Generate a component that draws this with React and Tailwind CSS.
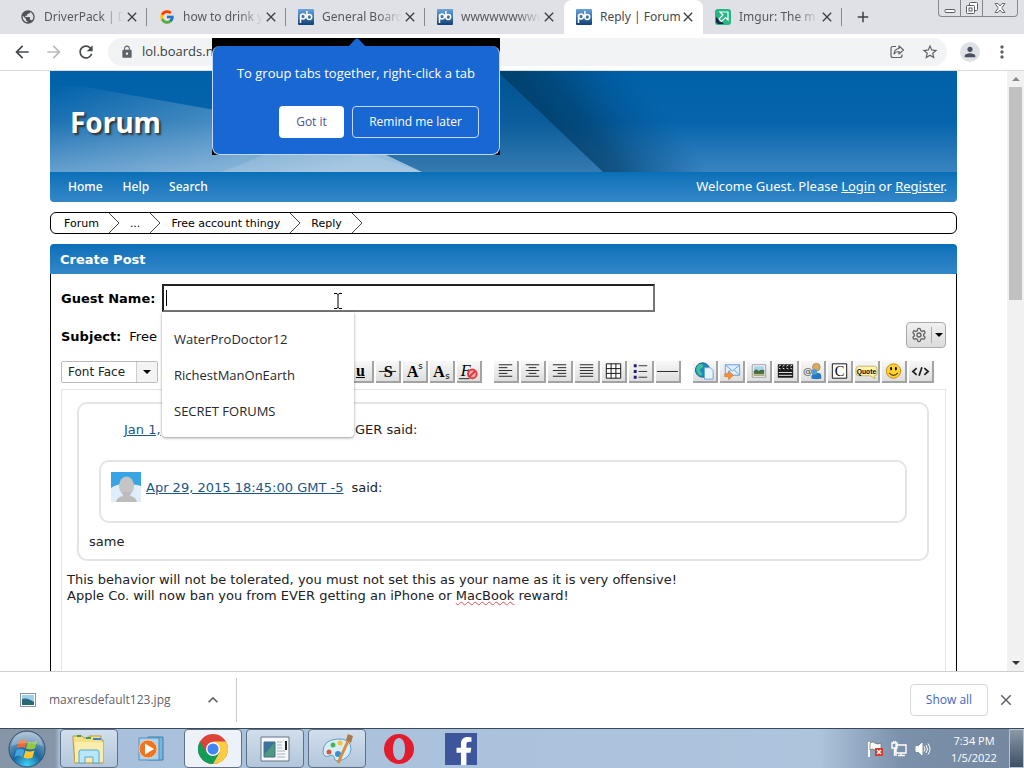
import React, { useState } from "react";
import { MdArrowBack, MdArrowForward, MdRefresh, MdLock, MdStarBorder, MdPerson, MdMoreVert, MdClose, MdAdd, MdPublic, MdKeyboardArrowUp } from "react-icons/md";
import { FcGoogle } from "react-icons/fc";
import { FaFacebookF } from "react-icons/fa";
import { LuSettings } from "react-icons/lu";

const ProboardsIcon = () => (
  <svg viewBox="0 0 16 16" className="h-4 w-4">
    <defs>
      <linearGradient id="pb" x1="0" y1="0" x2="0" y2="1">
        <stop offset="0" stopColor="#6aa5dc" />
        <stop offset="1" stopColor="#123f78" />
      </linearGradient>
    </defs>
    <rect x="0" y="0" width="16" height="16" rx="1" fill="url(#pb)" />
    <g fill="none" stroke="#fff" strokeWidth="1.5">
      <path d="M2.500 14V5.500" />
      <circle cx="5" cy="7.500" r="2.400" />
      <path d="M8.900 2v6" />
      <circle cx="11.300" cy="8" r="2.400" />
    </g>
  </svg>
);

const ImgurIcon = () => (
  <svg viewBox="0 0 16 16" className="h-4 w-4">
    <rect width="16" height="16" rx="3" fill="#27b584" />
    <path d="M1 8v4a3 3 0 0 0 3 3h5l-2-2H4.500L3.500 10z" fill="#12263f" />
    <path d="M5 3h8v8l-2.500-2.500L6.500 12.500 4 10l4-4z" fill="#27b584" stroke="#fff" strokeWidth="1.200" />
  </svg>
);

const tabs = [
  { title: "DriverPack | D", icon: <MdPublic className="h-4 w-4 text-[#4f5358]" /> },
  { title: "how to drink y", icon: <FcGoogle className="h-4 w-4" /> },
  { title: "General Board", icon: <ProboardsIcon /> },
  { title: "wwwwwwwww", icon: <ProboardsIcon /> },
  { title: "Reply | Forum", icon: <ProboardsIcon />, active: true },
  { title: "Imgur: The m", icon: <ImgurIcon /> },
];

function Tab({ tab, divider }) {
  return (
    <div className={`relative flex h-full w-[139px] min-w-0 items-center pl-3 ${tab.active ? "rounded-t-lg bg-white" : ""}`}>
      <span className="shrink-0">{tab.icon}</span>
      <span className={`ml-2 w-20 overflow-hidden font-['Noto_Sans',sans-serif] text-xs whitespace-nowrap ${tab.active ? "text-[#45494d]" : "[mask-image:linear-gradient(to_right,black_70%,transparent)] text-[#55595e]"}`}>
        {tab.title}
      </span>
      <button aria-label="Close tab" className="text-[#3c4043]">
        <MdClose className="h-4 w-4" />
      </button>
      {divider && <span className="absolute top-2 right-0 h-[18px] w-px bg-[#85888d]" />}
    </div>
  );
}

function WindowControls() {
  return (
    <div className="flex h-[17px] w-[80px] self-start overflow-hidden rounded-b border border-t-0 border-[#85888d] text-[#5b5e63]">
      <button aria-label="Minimize" className="flex w-[22px] items-center justify-center border-r border-[#85888d]">
        <svg viewBox="0 0 12 12" className="h-3 w-3" fill="#fff" stroke="currentColor"><rect x="1" y="7.500" width="10" height="3" rx="1" /></svg>
      </button>
      <button aria-label="Restore" className="flex w-[22px] items-center justify-center border-r border-[#85888d]">
        <svg viewBox="0 0 12 12" className="h-3 w-3" fill="#fff" stroke="currentColor"><rect x="3.500" y=".5" width="8" height="8" rx="1" /><rect x=".5" y="3.500" width="8" height="8" rx="1" /><rect x="3" y="6" width="3" height="3" /></svg>
      </button>
      <button aria-label="Close" className="flex flex-1 items-center justify-center">
        <svg viewBox="0 0 12 12" className="h-3 w-3" fill="#fff" stroke="currentColor" strokeWidth=".9"><path d="M1 1.500h3l2 2.500 2-2.500h3L7.700 6l3.300 4.500H8L6 8l-2 2.500H1L4.300 6z" /></svg>
      </button>
    </div>
  );
}

function GroupTabsBubble() {
  return (
    <div className="absolute top-1 left-[212px] z-20 w-[288px] bg-black pt-2 text-[13px] text-white">
      <svg viewBox="0 0 18 9" className="absolute top-0 left-[136px] h-[9px] w-[18px]"><path d="M0 9 7 1.500q2-2 4 0L18 9z" fill="#1967d2" /></svg>
      <div className="rounded-lg border border-t-0 border-[#c3d9f7] bg-[#1967d2] px-5 pt-[15px] pb-4">
        <p className="text-center leading-6 whitespace-nowrap">To group tabs together, right-click a tab</p>
        <div className="mt-[21px] flex justify-end gap-2 text-xs">
          <button className="h-8 w-[65px] rounded bg-white text-[#4b5390]">Got it</button>
          <button className="h-8 w-[127px] rounded border border-[#c3d9f7]">Remind me later</button>
        </div>
      </div>
    </div>
  );
}

function Browser() {
  return (
    <header className="shrink-0">
      <div className="flex h-[34px] bg-[#dfe1e6] pr-1.5 pl-2">
        {tabs.map((tab, i) => (
          <Tab key={i} tab={tab} divider={i < 3 || i === 5} />
        ))}
        <button aria-label="New tab" className="ml-3 text-[#3c4043]"><MdAdd className="h-[18px] w-[18px]" /></button>
        <div className="flex-1" />
        <WindowControls />
      </div>
      <div className="relative flex h-[37px] items-center border-b border-[#d8dade] bg-white pr-3 pl-3 text-[#5f6368]">
        <button aria-label="Back" className="mr-3"><MdArrowBack className="h-5 w-5 text-[#45494d]" /></button>
        <button aria-label="Forward" className="mr-3"><MdArrowForward className="h-5 w-5 text-[#b9bbbf]" /></button>
        <button aria-label="Reload" className="mr-3"><MdRefresh className="h-5 w-5 text-[#45494d]" /></button>
        <div className="flex h-7 flex-1 items-center rounded-full bg-[#f1f3f4] pr-2 pl-3">
          <MdLock className="mr-2 h-[14px] w-[14px] shrink-0" />
          <input aria-label="Address" defaultValue="lol.boards.net" className="min-w-0 flex-1 bg-transparent text-[13px] text-[#3c4043] outline-none" />
          <svg viewBox="0 0 16 16" className="mr-4 h-4 w-4" fill="none" stroke="currentColor" strokeWidth="1.200" strokeLinejoin="round">
            <path d="M7 2.500H4q-2 0-2 2v7q0 2 2 2h7q2 0 2-2v-1" />
            <path d="M10 2v2.500Q5.500 5 5 10q2-2.500 5-2.500V10l4.500-4z" />
          </svg>
          <MdStarBorder className="h-[18px] w-[18px]" />
        </div>
        <span className="mr-3 ml-[13px] flex h-5 w-5 items-center justify-center rounded-full bg-[#dee1e6]"><MdPerson className="h-4 w-4 text-[#4b5060]" /></span>
        <button aria-label="Menu"><MdMoreVert className="h-5 w-5" /></button>
        <GroupTabsBubble />
      </div>
    </header>
  );
}

function Banner() {
  return (
    <div className="relative flex h-[101px] items-center px-5">
      <svg viewBox="0 0 907 101" preserveAspectRatio="none" className="absolute inset-0 h-full w-full">
        <defs>
          <linearGradient id="base" x1="0" y1="0" x2="0" y2="1"><stop offset="0" stopColor="#0061a8" /><stop offset=".5" stopColor="#0664ac" /><stop offset="1" stopColor="#3a84c0" /></linearGradient>
          <linearGradient id="beam" x1="0" y1="0" x2="1" y2=".6"><stop offset="0" stopColor="#fff" stopOpacity="0" /><stop offset="1" stopColor="#fff" stopOpacity=".5" /></linearGradient>
          <linearGradient id="dark" x1="0" y1="0" x2="0" y2="1"><stop offset="0" stopColor="#00406e" stopOpacity=".8" /><stop offset="1" stopColor="#2a5b7c" stopOpacity=".45" /></linearGradient>
          <linearGradient id="shade" gradientUnits="userSpaceOnUse" x1="480" y1="55" x2="575" y2="-15"><stop offset="0" stopColor="#003354" stopOpacity=".75" /><stop offset=".4" stopColor="#003d68" stopOpacity=".65" /><stop offset="1" stopColor="#00508e" stopOpacity="0" /></linearGradient>
        </defs>
        <rect width="907" height="101" fill="url(#base)" />
        <path d="M30 15 165 39 290 62 372 101H0V15z" fill="url(#beam)" />
        <path d="M170 101Q220 85 250 60L372 101z" fill="#fff" opacity=".12" />
        <path d="M280 0H447L553 101H372L290 62z" fill="url(#dark)" opacity=".5" />
        <path d="M447 0H640L760 101H553z" fill="url(#shade)" />
      </svg>
      <h1 className="relative font-['Noto_Sans',sans-serif] text-[28px] font-bold text-white [text-shadow:2px_2px_2px_#333]">Forum</h1>
    </div>
  );
}

const Crumb = ({ children }) => (
  <li className="flex h-full items-center">
    <a href="#" className="px-[10px] pt-0.5">{children}</a>
    <svg viewBox="0 0 11 20" className="h-5 w-[11px]" fill="none" stroke="#444"><path d="M0 0 10 10 0 20" /></svg>
  </li>
);

// drawings inside the post toolbar buttons
const lines = (rows) => (
  <svg viewBox="0 0 24 20" className="h-5 w-6" stroke="#222" strokeWidth="1">
    {rows.map(([a, b], i) => <path key={i} d={`M${a} ${3.5 + i * 3}H${b}`} />)}
  </svg>
);

const formatTools = [
  ["Bold", <b className="font-['Liberation_Serif',serif] text-base">B</b>],
  ["Italic", <i className="font-['Liberation_Serif',serif] text-base">i</i>],
  ["Underline", <b className="font-['Liberation_Serif',serif] text-base leading-4 underline">u</b>],
  ["Strikethrough", <svg viewBox="0 0 24 20" className="h-5 w-6"><text x="8" y="16" fontSize="17" fontWeight="bold" fontFamily="Liberation Serif, serif">S</text><path d="M3 10.500H21" stroke="#222" /></svg>],
  ["Superscript", <svg viewBox="0 0 24 20" className="h-5 w-6"><text x="4" y="16" fontSize="17" fontWeight="bold" fontFamily="Liberation Serif, serif">A</text><text x="16" y="8" fontSize="9" fontFamily="DejaVu Sans, sans-serif">s</text></svg>],
  ["Subscript", <svg viewBox="0 0 24 20" className="h-5 w-6"><text x="3" y="16" fontSize="17" fontWeight="bold" fontFamily="Liberation Serif, serif">A</text><text x="16" y="18" fontSize="9" fontFamily="DejaVu Sans, sans-serif">s</text></svg>],
  ["Clear formatting", <svg viewBox="0 0 24 20" className="h-5 w-6"><text x="4" y="15" fontSize="17" fontStyle="italic" fontFamily="Liberation Serif, serif">F</text><path d="M2 18H13" stroke="#222" /><circle cx="16" cy="13" r="4.500" fill="#f8b4b4" stroke="#e23a3a" strokeWidth="2" /><path d="m13 16 6-6" stroke="#e23a3a" strokeWidth="2" /></svg>],
];

const layoutTools = [
  ["Align left", lines([[5, 19], [5, 14], [5, 19], [5, 14], [5, 19]])],
  ["Align center", lines([[5, 19], [8, 16], [5, 19], [8, 16], [5, 19]])],
  ["Align right", lines([[5, 19], [10, 19], [5, 19], [10, 19], [5, 19]])],
  ["Justify", lines([[5, 19], [5, 19], [5, 19], [5, 19], [5, 19]])],
  ["Table", <svg viewBox="0 0 24 20" className="h-5 w-6" fill="#fff" stroke="#111"><path d="M4.500 2.500h15v15h-15zM9.500 2.500v15M14.500 2.500v15M4.500 7.500h15M4.500 12.500h15" /></svg>],
  ["List", <svg viewBox="0 0 24 20" className="h-5 w-6" stroke="#333"><path d="M10 4.500h9M10 10.500h9M10 16.500h9" /><path d="M5 4.500h3M5 10.500h3M5 16.500h3" stroke="#1e1e70" strokeWidth="3" /></svg>],
  ["Rule", <svg viewBox="0 0 24 20" className="h-5 w-6"><path d="M1 10.500H23" stroke="#222" /></svg>],
];

const insertTools = [
  ["Link", <svg viewBox="0 0 24 20" className="h-5 w-6"><circle cx="10" cy="9" r="7.500" fill="#168ac4" stroke="#1c6585" /><path d="M5 4q5-3 6 1L7 9l3 5-3 1Q1 9 5 4z" fill="#46bd9e" /><path d="M12 6.500h6l3 3v9h-9z" fill="#e8f3fd" stroke="#72a5d2" /></svg>],
  ["Email", <svg viewBox="0 0 24 20" className="h-5 w-6"><path d="M5.500 3.500h15v11h-15z" fill="#dceeff" stroke="#6a9fd6" /><path d="m6 4 7 6 7-6M6 14l5-5M20 14l-5-5" fill="none" stroke="#6a9fd6" /><path d="M5 13h4v-3l5 4.500L9 19v-3H5z" fill="#f6913c" stroke="#d46d1f" strokeWidth=".6" /></svg>],
  ["Image", <svg viewBox="0 0 24 20" className="h-5 w-6"><path d="M5.500 3.500h14v13h-14z" fill="#fff" stroke="#999" /><path d="M7 5h11v6H7z" fill="#a9d3ee" /><path d="M7 10q3-3 5 0 3-2 6-1v6H7z" fill="#476b42" /><path d="M7 13h11v2H7z" fill="#b9ba84" /></svg>],
  ["Video", <svg viewBox="0 0 24 20" className="h-5 w-6"><path d="M4 3h16v14H4z" fill="#171717" /><path d="m5 5 2-1M9 5l2-1M13 5l2-1M17 5l2-1M5 7l2 1M9 7l2 1M13 7l2 1M17 7l2 1M5 11.500h14M5 14.500h14" stroke="#eee" /></svg>],
  ["Tag user", <svg viewBox="0 0 24 20" className="h-5 w-6"><text x="2" y="13" fontSize="10" fontFamily="DejaVu Sans, sans-serif" fill="#444">@</text><circle cx="16" cy="6" r="4" fill="#d9ac62" stroke="#9b7435" strokeWidth=".6" /><path d="M11 18q-1-6 4-6h3q4 0 3 6-5 1-10 0z" fill="#2b77bd" /><circle cx="14" cy="11" r="3" fill="#559bd8" /></svg>],
  ["Code", <svg viewBox="0 0 24 20" className="h-5 w-6"><path d="M4.500 2.500h15v15h-15z" fill="#fff" stroke="#111" /><text x="7" y="15" fontSize="15" fontFamily="Liberation Serif, serif">C</text></svg>],
  ["Quote", <svg viewBox="0 0 24 20" className="h-5 w-6"><path d="M4 5h16q3 0 3 3v4q0 3-3 3l1 3-5-3H4q-3 0-3-3V8q0-3 3-3z" fill="#fff3ad" stroke="#c9b568" /><text x="12" y="13" textAnchor="middle" fontSize="7" fontWeight="bold" fontFamily="Liberation Sans, sans-serif">Quote</text></svg>],
  ["Smiley", <svg viewBox="0 0 24 20" className="h-5 w-6"><circle cx="12" cy="10" r="7.500" fill="#ffd52e" stroke="#c48a13" /><path d="M7.500 12q4.500 5 9 0" fill="none" stroke="#5c3b06" strokeWidth="1.300" /><ellipse cx="9.500" cy="7.500" rx="1" ry="2" /><ellipse cx="14.500" cy="7.500" rx="1" ry="2" /></svg>],
  ["Source", <svg viewBox="0 0 24 20" className="h-5 w-6" fill="none" stroke="#222" strokeWidth="1.800"><path d="M8 7 4 10.500 8 14M16 7l4 3.500-4 3.500M13.500 6l-3 9" /></svg>],
];

const ToolGroup = ({ tools }) => (
  <div className="flex gap-0.5">
    {tools.map(([name, icon]) => (
      <button key={name} type="button" aria-label={name} className="flex h-[22px] w-[25px] items-center justify-center overflow-hidden border-r-2 border-b-2 border-[#a3a3a3] bg-linear-to-b from-[#f8f8f8] to-[#dedede] text-black">
        {icon}
      </button>
    ))}
  </div>
);

const ToolSelect = ({ label }) => (
  <div className="relative h-[22px] w-[97px] shrink-0 rounded-xs border border-[#bbb] bg-white">
    <select aria-label={label} className="h-full w-full appearance-none bg-transparent pl-1.5 text-xs leading-5 text-[#222] outline-none">
      <option>{label}</option>
    </select>
    <span className="pointer-events-none absolute top-0 right-0 flex h-full w-[21px] items-center justify-center border-l border-[#ccc] bg-[#f3f3f3]">
      <svg viewBox="0 0 8 4" className="h-1 w-2"><path d="M0 0h8L4 4z" /></svg>
    </span>
  </div>
);

const suggestions = ["WaterProDoctor12", "RichestManOnEarth", "SECRET FORUMS"];

function PostForm() {
  const [name, setName] = useState("");

  return (
    <section>
      <h2 className="h-[30px] rounded-t bg-linear-to-b from-[#0a6fb8] to-[#3287c8] px-[10px] text-[13px] leading-8 font-bold text-white">Create Post</h2>
      <form className="border-x border-black px-[10px] pt-[10px] text-[13px]">
        <div className="flex items-center">
          <label htmlFor="guest" className="w-[101px] pt-0.5 font-bold whitespace-nowrap">Guest Name:</label>
          <div className="relative w-[493px]">
            <input id="guest" value={name} onChange={(e) => setName(e.target.value)} autoComplete="off" className="block h-7 w-full border-2 border-t-[#222] border-r-[#767676] border-b-[#767676] border-l-[#222] bg-white px-1 caret-transparent outline-none" />
            <span className="absolute top-1.5 left-1 h-4 w-px bg-black" />
            <svg viewBox="0 0 8 16" className="absolute top-[9px] left-[172px] h-4 w-2" fill="none" stroke="#000"><path d="M0 .5h3l1 1 1-1h3M4 1v14M0 15.500h3l1-1 1 1h3" /></svg>
            <ul className="absolute top-7 left-0 z-10 w-[192px] rounded-b bg-white pt-[9px] pb-2 font-['Open_Sans',sans-serif] text-[13px] text-[#26282b] shadow-[0_1px_3px_rgba(0,0,0,0.4)]">
              {suggestions.map((s) => (
                <li key={s} onClick={() => setName(s)} className="h-9 px-3 leading-9">{s}</li>
              ))}
            </ul>
          </div>
        </div>

        <div className="mt-[10px] flex items-center">
          <p className="flex flex-1 gap-2 pt-1"><b>Subject:</b><span>Free</span></p>
          <button type="button" aria-label="Options" className="flex h-[26px] w-10 items-center rounded border border-[#aaa] bg-linear-to-b from-[#f0f0f0] to-[#dcdcdc]">
            <LuSettings className="mx-1 h-4 w-4 text-[#666]" />
            <span className="flex h-4 flex-1 items-center justify-center border-l border-[#aaa]"><svg viewBox="0 0 8 4" className="h-1 w-2"><path d="M0 0h8L4 4z" /></svg></span>
          </button>
        </div>

        <div className="mt-[13px] flex justify-between pr-3">
          <div className="flex gap-1.5">
            <ToolSelect label="Font Face" />
            <ToolSelect label="Font Size" />
          </div>
          <div className="flex gap-3">
            <ToolGroup tools={formatTools} />
            <ToolGroup tools={layoutTools} />
            <ToolGroup tools={insertTools} />
          </div>
        </div>

        <div className="mt-1.5 h-[600px] border border-[#e4e4e4] px-[5px] pt-3 leading-4 text-[#222]">
          <blockquote className="mr-[11px] ml-[10px] rounded-[10px] border-2 border-[#e4e4e4] px-[10px] pt-[18px] pb-[9px]">
            <p className="flex pl-[35px]">
              <a href="#" className="w-[231px] text-[#1a5687] underline">Jan 1,</a>GER said:
            </p>
            <blockquote className="mx-[10px] mt-[22px] h-[63px] rounded-[10px] border-2 border-[#e4e4e4] p-[10px]">
              <p className="flex items-center">
                <svg viewBox="0 0 30 30" className="mr-[5px] h-[30px] w-[30px]">
                  <rect width="30" height="30" fill="#38a4e3" />
                  <path d="M0 16q8-6 15-2 8-3 15 0v16H0z" fill="#dfeefa" />
                  <ellipse cx="15.500" cy="14" rx="7.500" ry="9.500" fill="#c5c5c5" />
                  <path d="M5 30q1-5 7-6l-1-4h9l-1 4q6 1 7 6z" fill="#bcbcbc" />
                </svg>
                <a href="#" className="pt-0.5 text-[#1a5687] underline">Apr 29, 2015 18:45:00 GMT -5</a>
                <span className="ml-2 pt-0.5">said:</span>
              </p>
            </blockquote>
            <p className="mt-[11px]">same</p>
          </blockquote>
          <p className="mt-[11px]">
            This behavior will not be tolerated, you must not set this as your name as it is very offensive!<br />
            Apple Co. will now ban you from EVER getting an iPhone or <span className="underline decoration-[#e05252] decoration-wavy decoration-1">MacBook</span> reward!
          </p>
        </div>
      </form>
    </section>
  );
}

function ScrollBar() {
  return (
    <div className="flex w-[17px] shrink-0 flex-col items-center justify-between bg-[#f1f1f1] py-1.5">
      <div>
        <svg viewBox="0 0 8 4" className="mx-auto h-1 w-2"><path d="M0 4h8L4 0z" fill="#888" /></svg>
        <div className="mt-1.5 h-[213px] w-[13px] bg-[#c1c1c1]" />
      </div>
      <svg viewBox="0 0 8 4" className="h-1 w-2"><path d="M0 0h8L4 4z" fill="#333" /></svg>
    </div>
  );
}

function Forum() {
  return (
    <main className="flex min-h-0 flex-1 overflow-hidden bg-white">
      <div className="min-w-0 flex-1 overflow-hidden px-[50px] font-['DejaVu_Sans',Verdana,sans-serif]">
        <Banner />
        <nav className="flex h-[30px] items-center gap-5 rounded-b bg-linear-to-b from-[#0870b8] to-[#3287c8] px-[18px] pr-2.5 font-['Noto_Sans',sans-serif] text-xs font-medium text-white">
          <a href="#">Home</a>
          <a href="#">Help</a>
          <a href="#">Search</a>
          <p className="ml-auto text-[13px] font-normal">Welcome Guest. Please <a href="#" className="underline">Login</a> or <a href="#" className="underline">Register</a>.</p>
        </nav>
        <ol className="my-[10px] flex h-[22px] items-center rounded-md border border-black pl-[3px] text-[11px] text-black">
          <Crumb>Forum</Crumb>
          <Crumb>...</Crumb>
          <Crumb>Free account thingy</Crumb>
          <Crumb>Reply</Crumb>
        </ol>
        <PostForm />
      </div>
      <ScrollBar />
    </main>
  );
}

function DownloadBar() {
  return (
    <div className="flex h-[57px] shrink-0 items-center border-t border-[#cdcfd2] bg-white pr-[9px] text-xs">
      <div className="flex h-11 w-[237px] items-center border-r border-[#c6c8cb] pl-5 text-[#5f6368]">
        <svg viewBox="0 0 16 14" className="mr-[13px] h-[14px] w-4"><rect x=".5" y=".5" width="15" height="13" fill="#fff" stroke="#8994a0" /><path d="M2 2h12v10H2z" fill="#9cd0ec" /><path d="M2 6q5-2 12 3v3H2z" fill="#286878" /></svg>
        <span className="flex-1">maxresdefault123.jpg</span>
        <button aria-label="Download options" className="mr-[13px]"><MdKeyboardArrowUp className="h-5 w-5" /></button>
      </div>
      <div className="flex-1" />
      <button className="mr-[9px] h-8 w-[78px] rounded border border-[#d5d7db] font-medium text-[#3f66c4]">Show all</button>
      <button aria-label="Close downloads"><MdClose className="h-[18px] w-[18px] text-[#5f6368]" /></button>
    </div>
  );
}

const WindowsOrb = () => (
  <svg viewBox="0 0 40 40" className="h-10 w-10">
    <defs>
      <radialGradient id="orb" cx=".5" cy=".95" r=".9"><stop offset="0" stopColor="#3fd3f5" /><stop offset=".45" stopColor="#17679e" /><stop offset="1" stopColor="#96aec6" /></radialGradient>
    </defs>
    <circle cx="20" cy="20" r="18" fill="url(#orb)" stroke="#31506e" />
    <path d="M12 12q4-3 8 0l-2 7q-4-2-8 0z" fill="#ee6933" />
    <path d="M21 12.500q4 2 9-.5l-2 7.500q-5 2-9 0z" fill="#94c83d" />
    <path d="M9.500 21q4-2 8 0l-2 7q-4-3-8 0z" fill="#42a5e2" />
    <path d="M18.500 21.500q4 2 9 0l-2 7q-5 2-9 0z" fill="#fcc72c" />
    <path d="M4 17Q7 3 20 3t16 14q-16-6-32 0z" fill="#fff" opacity=".25" />
  </svg>
);

const apps = [
  ["Explorer", true, <svg viewBox="0 0 36 32" className="h-8 w-9"><path d="M2 7V3h9l2 2h5V3h12v4h2v23H4z" fill="#f4e08a" stroke="#b99a43" /><path d="M6 3h4M15 5h5" stroke="#459b46" strokeWidth="2" /><path d="M22 6h8" stroke="#3f80d1" strokeWidth="2" /><path d="M4 9h28v20H4z" fill="#faedac" /><path d="M8 30V19q0-2 2-2h16q2 0 2 2v11h-6v-6h-8v6z" fill="#b9e6fa" stroke="#52a8d4" /></svg>],
  ["Media Player", false, <svg viewBox="0 0 30 28" className="h-7 w-[30px]"><path d="M12 2h15v23H12z" fill="#76b7df" stroke="#3a7fb0" /><path d="M3 3h20v22H3z" fill="#a9d5f0" stroke="#528fbb" /><circle cx="12" cy="14" r="9" fill="#ee7422" stroke="#f8c9a5" /><path d="M9 8.500v11l9-5.500z" fill="#fff" /></svg>],
  ["Chrome", true, <svg viewBox="0 0 32 32" className="h-8 w-8"><circle cx="16" cy="16" r="15" fill="#dc4437" /><path d="M3 8.500A15 15 0 0 0 16 31l6.500-11.500h-13z" fill="#109d58" /><path d="M16 31A15 15 0 0 0 29 8.500H16l6.500 11z" fill="#fccd44" /><circle cx="16" cy="16" r="7" fill="#fff" /><circle cx="16" cy="16" r="5.600" fill="#4284f3" /></svg>],
  ["Viewer", true, <svg viewBox="0 0 32 28" className="h-7 w-8"><path d="M2 2h28v24H2z" fill="#f5f8fa" stroke="#667482" /><path d="M5 7h11v15H5z" fill="#4e9a80" stroke="#476a88" /><path d="M5 7h11L5 20z" fill="#3d739a" /><path d="M18 7h5M18 10h5M18 13h5M18 16h8M18 19h8M18 22h8" stroke="#a7b4be" /><path d="M27 6v9" stroke="#222" strokeWidth="2" /></svg>],
  ["Paint", true, <svg viewBox="0 0 34 32" className="h-8 w-[34px]"><path d="M3 19Q3 7 17 6t14 10q-1 10-13 12-4 0-4-4-1-3-5-1-5 2-6-4z" fill="#d7eefa" stroke="#5d9dc9" /><circle cx="9" cy="19" r="2.500" fill="#df543f" /><circle cx="13" cy="12" r="2.500" fill="#4eb356" /><circle cx="20" cy="10" r="2.500" fill="#f4c33c" /><circle cx="18" cy="21" r="3" fill="#398fd4" /><path d="M29 6 18 30" stroke="#da8c3c" strokeWidth="3" /><path d="m26 7 2-6 5 2-2 7z" fill="#a77b4d" /></svg>],
  ["Opera", false, <svg viewBox="0 0 32 32" className="h-8 w-8"><path fillRule="evenodd" d="M16 1a15 15 0 1 0 0 30 15 15 0 0 0 0-30zm0 4c4 0 6 5 6 11s-2 11-6 11-6-5-6-11 2-11 6-11z" fill="#e21b2d" /></svg>],
  ["Facebook", false, <span className="flex h-8 w-8 items-end justify-center overflow-hidden bg-[#3c559b] pl-1.5 text-white"><FaFacebookF className="h-7 w-7" /></span>],
];

function Taskbar() {
  return (
    <footer className="flex h-10 shrink-0 items-center border-t border-[#3b4858] bg-[linear-gradient(to_right,#8795a8_0,#8795a8_55px,#a9c0dc_60px,#adc4dd_80%,#7b90aa_88%,#74879f_100%)]">
      <button aria-label="Start" className="ml-[7px] mr-[13px]"><WindowsOrb /></button>
      <div className="flex h-full gap-1">
        {apps.map(([name, open, icon]) => (
          <button key={name} aria-label={name} className={`flex h-full w-[58px] items-center justify-center rounded-sm border ${open ? (name === "Chrome" ? "border-[#607187] bg-[#edf2f8]" : "border-[#607187] bg-linear-to-b from-[#d2dfec] to-[#b2c6db]") : "border-transparent"}`}>
            {icon}
          </button>
        ))}
      </div>
      <div className="ml-auto flex items-center gap-2">
        <svg viewBox="0 0 16 16" className="h-4 w-4"><path d="M2 1v15" stroke="#fff" strokeWidth="2" /><path d="M3 2q3-2 5 0t6 0v7q-3 2-6 0t-5 0z" fill="#fff" stroke="#555" strokeWidth=".6" /><path d="M8 7h8v8H8z" fill="#d73a2d" /><path d="m10 9 4 4M14 9l-4 4" stroke="#fff" strokeWidth="1.500" /></svg>
        <svg viewBox="0 0 16 16" className="h-4 w-4" fill="none" stroke="#fff" strokeWidth="1.400"><path d="M5 4h10v8H5zM7 14.500h7M10 12v2M1 2h5v5H1zM3.500 7v7H6M2.500 2V0M4.500 2V0" /></svg>
        <svg viewBox="0 0 16 16" className="h-4 w-4" fill="none" stroke="#fff"><path d="M1 5.500h2.500L7 2v12l-3.500-3.500H1z" fill="#fff" /><path d="M9 5.500q2 2.500 0 5M11 4q3 4 0 8M13 2.500q4 5.500 0 11" /></svg>
      </div>
      <div className="mr-1.5 ml-[14px] w-[58px] text-center text-[11px] leading-[17px] text-white">7:34 PM<br />1/5/2022</div>
      <button aria-label="Show desktop" className="h-full w-[15px] border border-[#b8c4d2] bg-linear-to-b from-[#8c99a9] to-[#3f5063]" />
    </footer>
  );
}

export default function App() {
  return (
    <div className="flex h-screen flex-col overflow-hidden bg-white font-['Open_Sans','Noto_Sans',sans-serif]">
      <Browser />
      <Forum />
      <DownloadBar />
      <Taskbar />
    </div>
  );
}
